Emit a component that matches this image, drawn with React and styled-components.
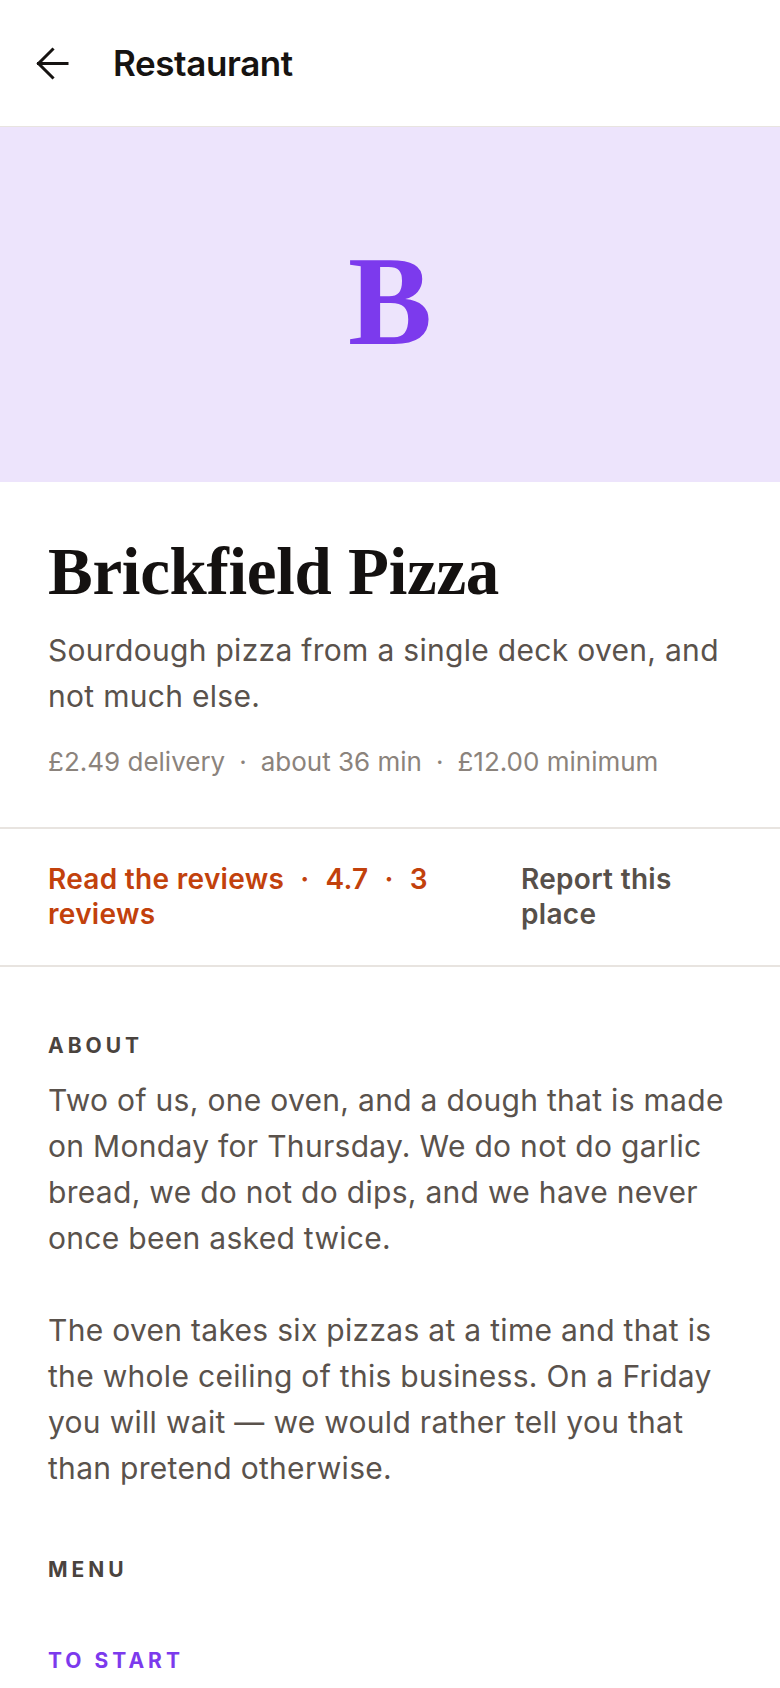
import styled, { createGlobalStyle } from 'styled-components';

const GlobalStyle = createGlobalStyle`
  html, body {
    margin: 0;
    padding: 0;
    background: #ffffff;
  }
  body {
    font-family: Inter, "Noto Sans", "Liberation Sans", sans-serif;
    -webkit-font-smoothing: antialiased;
  }
  * {
    box-sizing: border-box;
  }
`;

const Page = styled.div`
  width: 780px;
  min-height: 1688px;
  background: #ffffff;
`;

const TopBar = styled.header`
  height: 127px;
  display: flex;
  align-items: center;
  gap: 44px;
  padding: 0 36px;
  border-bottom: 1px solid #e8e4e0;
`;

const BackButton = styled.button`
  display: flex;
  align-items: center;
  justify-content: center;
  width: 33px;
  height: 33px;
  padding: 0;
  border: 0;
  background: none;
  color: #161311;
  cursor: pointer;
`;

const TopTitle = styled.h1`
  margin: 0;
  font-size: 35px;
  font-weight: 600;
  letter-spacing: -0.4px;
  color: #161311;
`;

const Hero = styled.div`
  height: 355px;
  display: flex;
  align-items: center;
  justify-content: center;
  padding-bottom: 6px;
  background: #ede4fc;
`;

const Monogram = styled.span`
  font-family: "Liberation Serif", "Times New Roman", serif;
  font-weight: 700;
  font-size: 126px;
  line-height: 1;
  color: #7c3aed;
`;

const Intro = styled.section`
  padding: 53px 48px 47px;
  border-bottom: 2px solid #e8e4e0;
`;

const Name = styled.h2`
  margin: 0 0 19px;
  font-family: "Liberation Serif", "Times New Roman", serif;
  font-weight: 700;
  font-size: 67px;
  line-height: 73px;
  letter-spacing: -0.3px;
  color: #141110;
`;

const Lede = styled.p`
  margin: 0;
  font-size: 30px;
  line-height: 46px;
  letter-spacing: 0.3px;
  color: #5a524c;
`;

const Meta = styled.div`
  margin-top: 25px;
  font-size: 26px;
  line-height: 36px;
  color: #8b837c;
`;

const Dot = styled.span`
  padding: 0 ${p => (p.$wide ? 16 : 14)}px;
`;

const Actions = styled.div`
  display: grid;
  grid-template-columns: 1fr 211px;
  column-gap: 48px;
  padding: 33px 48px;
  border-bottom: 2px solid #e8e4e0;
  font-size: 28px;
  line-height: 35px;
  font-weight: 600;
  letter-spacing: 0.3px;
`;

const ActionLink = styled.a`
  color: ${p => (p.$accent ? '#c2410c' : '#57504a')};
  text-decoration: none;
  cursor: pointer;
`;

const Body = styled.section`
  padding: 66px 48px 40px;
`;

const Label = styled.h3`
  margin: 0 0 18px;
  font-size: 21px;
  line-height: 26px;
  font-weight: 700;
  letter-spacing: 4px;
  text-transform: uppercase;
  color: ${p => (p.$accent ? '#7c3aed' : '#4a433e')};
`;

const Para = styled.p`
  margin: 0;
  font-size: 30px;
  line-height: 46px;
  letter-spacing: 0.3px;
  color: #5a524c;

  & + & {
    margin-top: 46px;
  }
`;

const Block = styled.div`
  & + & {
    margin-top: 66px;
  }
`;

const MenuGroup = styled.div`
  padding-top: 47px;
`;

const BackIcon = () => (
  <svg width="33" height="33" viewBox="0 0 33 33" fill="none" stroke="currentColor" strokeWidth="3" strokeLinecap="square">
    <path d="M2.5 16.5H31" />
    <path d="M16.5 2.5 2.5 16.5 16.5 30.5" />
  </svg>
);

export default function App() {
  return (
    <Page>
      <GlobalStyle />
      <TopBar>
        <BackButton aria-label="Back">
          <BackIcon />
        </BackButton>
        <TopTitle>Restaurant</TopTitle>
      </TopBar>

      <Hero>
        <Monogram>B</Monogram>
      </Hero>

      <Intro>
        <Name>Brickfield Pizza</Name>
        <Lede>Sourdough pizza from a single deck oven, and not much else.</Lede>
        <Meta>
          £2.49 delivery<Dot>·</Dot>about 36 min<Dot>·</Dot>£12.00 minimum
        </Meta>
      </Intro>

      <Actions>
        <ActionLink $accent>
          Read the reviews<Dot $wide>·</Dot>4.7<Dot $wide>·</Dot>3 reviews
        </ActionLink>
        <ActionLink>Report this place</ActionLink>
      </Actions>

      <Body>
        <Block>
          <Label>About</Label>
          <Para>
            Two of us, one oven, and a dough that is made on Monday for Thursday. We do not do garlic
            bread, we do not do dips, and we have never once been asked twice.
          </Para>
          <Para>
            The oven takes six pizzas at a time and that is the whole ceiling of this business. On a
            Friday you will wait — we would rather tell you that than pretend otherwise.
          </Para>
        </Block>
        <Block>
          <Label>Menu</Label>
          <MenuGroup>
            <Label $accent>To start</Label>
          </MenuGroup>
        </Block>
      </Body>
    </Page>
  );
}
